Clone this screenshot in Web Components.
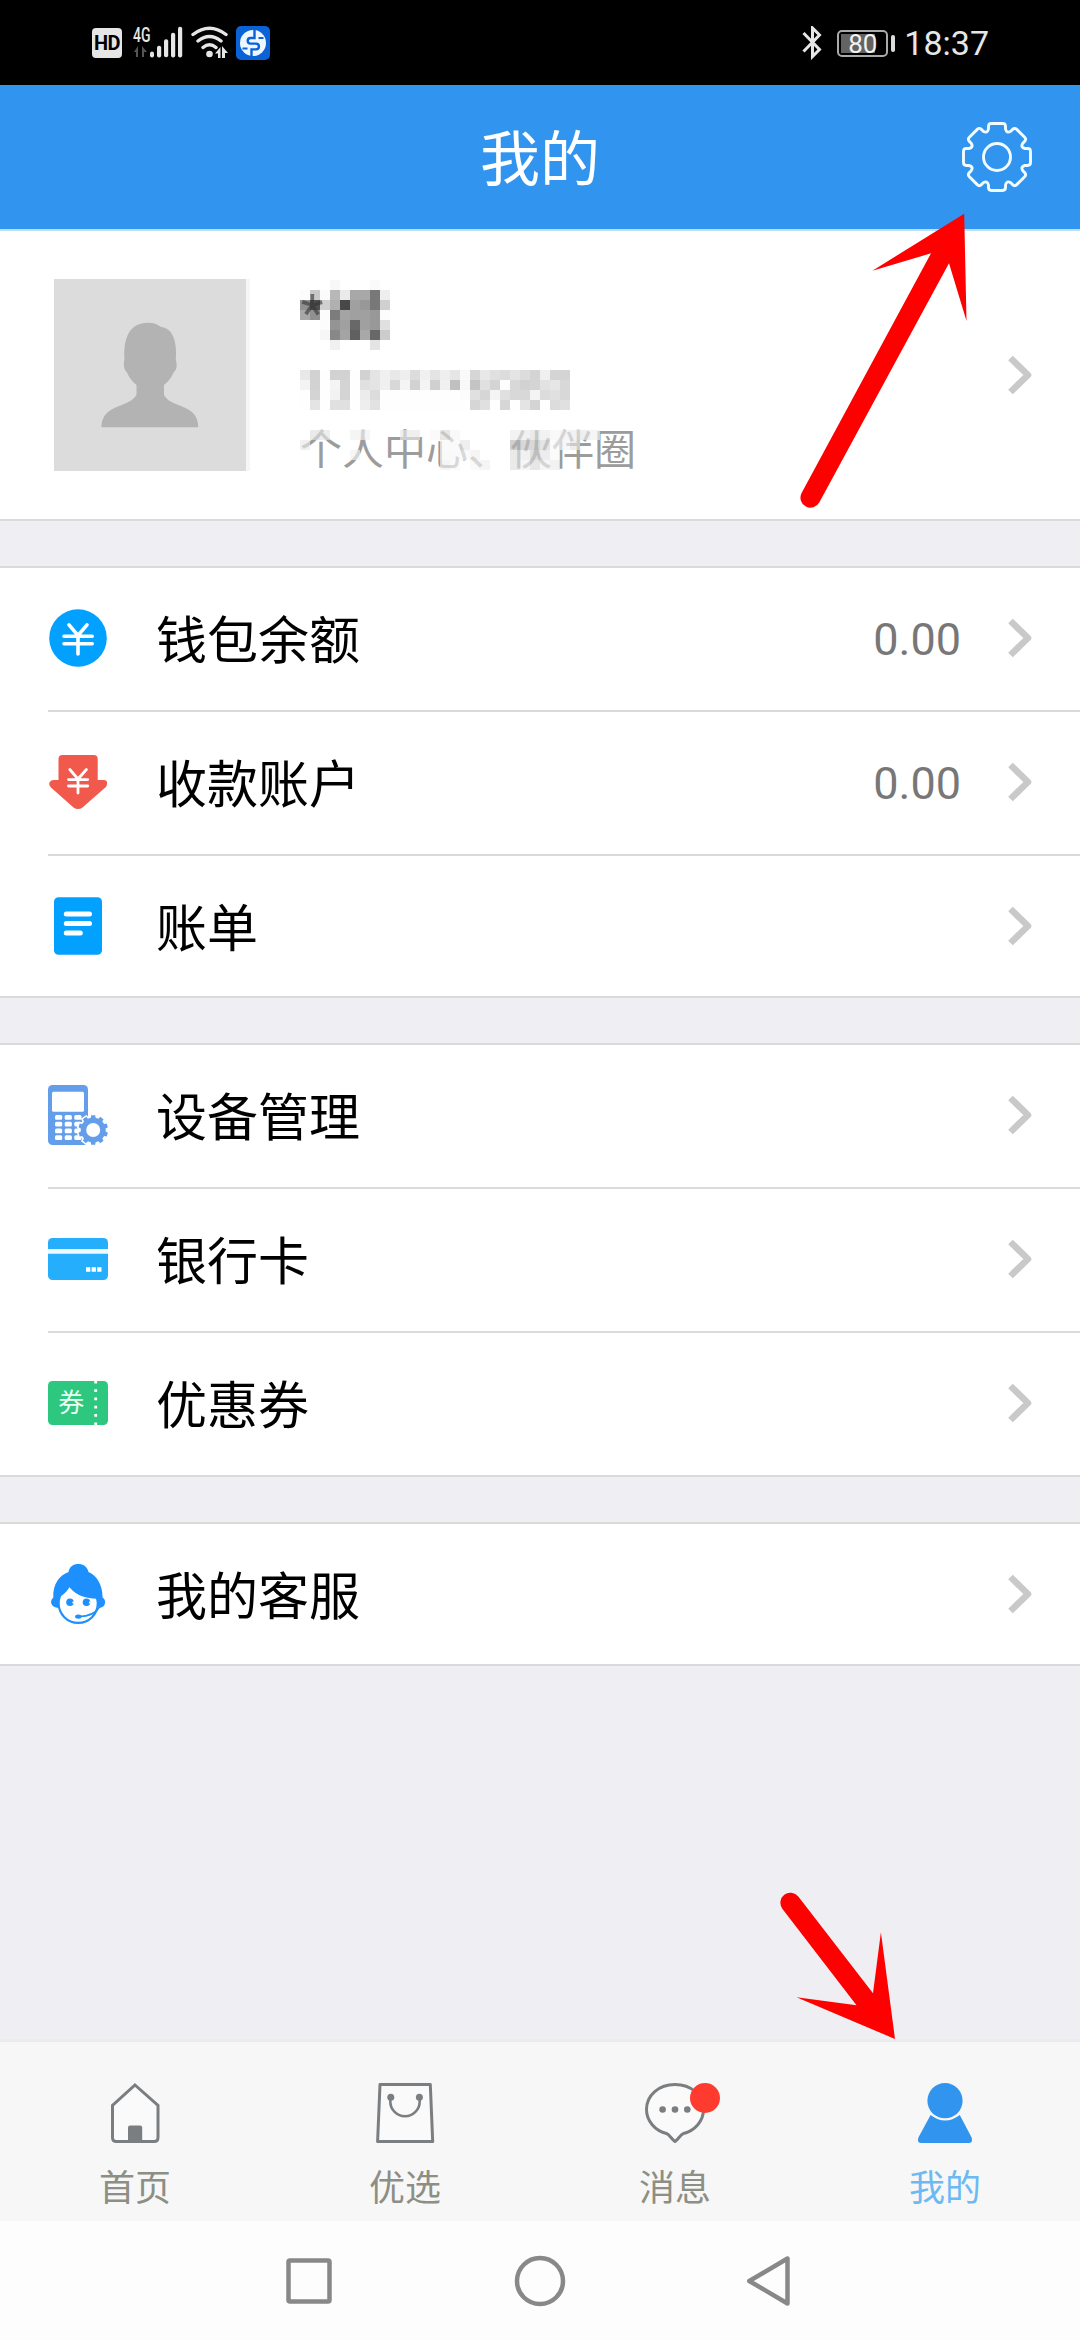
<!DOCTYPE html>
<html lang="zh-CN">
<head>
<meta charset="utf-8">
<title>我的</title>
<style>
  body{margin:0;background:#efeef3;font-family:Roboto,"Noto Sans CJK SC",sans-serif}
</style>
</head>
<body>
<app-screen>
  <status-bar slot="top" time="18:37" battery="80"></status-bar>
  <title-bar slot="top">我的</title-bar>
  <profile-card>个人中心、伙伴圈</profile-card>
  <cell-group>
    <cell-row icon="wallet" value="0.00">钱包余额</cell-row>
    <cell-row icon="account" value="0.00">收款账户</cell-row>
    <cell-row icon="bill" last>账单</cell-row>
  </cell-group>
  <cell-group>
    <cell-row icon="device">设备管理</cell-row>
    <cell-row icon="card">银行卡</cell-row>
    <cell-row icon="coupon" last tall>优惠券</cell-row>
  </cell-group>
  <cell-group>
    <cell-row icon="service" last>我的客服</cell-row>
  </cell-group>
  <tab-bar slot="bottom">
    <tab-item icon="home">首页</tab-item>
    <tab-item icon="bag">优选</tab-item>
    <tab-item icon="chat" badge>消息</tab-item>
    <tab-item icon="me" active>我的</tab-item>
  </tab-bar>
  <nav-keys slot="bottom"></nav-keys>
  <hint-arrows slot="overlay"></hint-arrows>
</app-screen>

<script>
// closed gear outline around 0,0: the same tooth turned n times
function gearPath(n, tooth){
  let d = '';
  for(let i=0;i<n;i++){
    const a = i*2*Math.PI/n, c = Math.cos(a), s = Math.sin(a);
    tooth.forEach(([cmd, ...p], k)=>{
      const out = [];
      for(let j=0;j<p.length;j+=2) out.push((p[j]*c-p[j+1]*s).toFixed(2), (p[j]*s+p[j+1]*c).toFixed(2));
      d += (i===0 && k===0 ? 'M' : cmd) + out.join(' ');
    });
  }
  return d + 'Z';
}

const bigGear = gearPath(8, [
  ['L',-8.5,-28],['L',-8.5,-30.6],['Q',-8.5,-33.5,-5.6,-33.5],['L',5.6,-33.5],
  ['Q',8.5,-33.5,8.5,-30.6],['L',8.5,-28],['Q',9.6,-23.2,13.79,-25.81]
]);
const smallGear = gearPath(10, [['L',-2.4,-12.3],['L',-2,-14.8],['L',2,-14.8],['L',2.4,-12.3]]);

const keys = [7,16.7,26.3].map(x => [30,36.7,43.5,50.2].map(y =>
  `<rect x="${x}" y="${y}" width="7.2" height="4.8" rx="1.5" fill="#fff"/>`).join('')).join('');

// all icons sit in a 60x60 box
const ICONS = {
  wallet: `<circle cx="30" cy="30" r="28.8" fill="#03a1ff"/>
    <path d="M21 16.8 30 27.5 39 16.8M30 27.5V46M16 28.2h28.2M16 35.8h28.2" stroke="#fff" stroke-width="3.6" fill="none" stroke-linecap="round"/>`,
  account: `<path d="M14.5 3h31.2q4 0 4 4v21h6q4.5 0 3 5.5-.5 1.5-2 2.6L34.5 55.5q-4.5 3-9 0L3.5 36q-3-2.5-2-5.5.8-2.5 4-2.5h5V7q0-4 4-4z" fill="#f0594c"/>
    <path d="M21.8 17.5 30 27 38.400 17.5M30 27v14M20.5 27.6h19.2M20.5 34h19.2" stroke="#fff" stroke-width="2.8" fill="none" stroke-linecap="round"/>`,
  bill: `<rect x="6" y="1.3" width="48" height="57.4" rx="4.5" fill="#03a1ff"/>
    <path d="M18.3 18h23.2M18.3 27.6h23.2M18.3 37h14" stroke="#fff" stroke-width="5" stroke-linecap="round"/>`,
  device: `<rect width="40" height="60" rx="4.5" fill="#649eea"/>
    <rect x="4" y="6.8" width="32" height="20" rx="1.5" fill="#fff"/>${keys}
    <g transform="translate(45.2 45)"><path d="${smallGear}" fill="#649eea" stroke="#fff" stroke-width="3" paint-order="stroke"/><circle r="7" fill="#fff"/></g>`,
  card: `<rect y="9" width="60" height="42" rx="4.5" fill="#24aefb"/><path d="M0 20h60v4.700H0z" fill="#fff" opacity=".93"/>
    <path d="M38 38.2h4.3v4.6H38zM43.6 38.2h4.3v4.6h-4.3zM49.2 38.2h4.3v4.6h-4.3z" fill="#fff"/>`,
  coupon: `<rect y="8" width="60" height="44" rx="4.5" fill="#2ec780"/>
    <text x="23.2" y="38.500" text-anchor="middle" font-size="26" fill="#eafff3">券</text>
    <path d="M47.7 8v44" stroke="#fff" stroke-width="2.8" stroke-dasharray="2.6 5.68"/>`,
  service: `<circle cx="30.2" cy="39.3" r="19.6" fill="#fff" stroke="#1e90fe" stroke-width="2.2"/>
    <path d="M20.5 8C21.5 2.5 25.5 0 30.3 0s9 2.5 10.2 8C48.5 11.5 54.5 20 54.6 33.5q2.8 1.5 2.4 5.5-.4 4.2-6.3 5.2l-2.5-9.5C39 34.5 28.5 32 21.5 23.3 19 27.5 15 31.5 11.5 32.7q-2 5-1.3 11.3-7-1-7.2-6 .1-3 2.300-4.500C4.500 20 12 11 20.500 8z" fill="#1e90fe"/>
    <circle cx="22" cy="38.3" r="3.8" fill="#1e90fe"/><circle cx="38.5" cy="38.3" r="3.8" fill="#1e90fe"/>
    <circle cx="25.3" cy="38.6" r="1" fill="#fff"/><circle cx="41.8" cy="38.6" r="1" fill="#fff"/>
    <path d="M51 43.500Q46 52 31 52.600" stroke="#1e90fe" stroke-width="1.8" fill="none"/><ellipse cx="30.3" cy="52.6" rx="3.2" ry="2.2" fill="#1e90fe"/>`,
  home: `<path d="M30 2 53 22.500v32q0 4-4 4H11.500q-4 0-4-4v-32z" fill="#fafafa" stroke="#7b7e80" stroke-width="3"/>
    <path d="M23 60V44.500q0-2 2-2h10.200q2 0 2 2V60z" fill="#7b7e80"/>`,
  bag: `<path d="M5 1.5h50.3l2.400 57H2.600z" fill="#fafafa" stroke="#7b7e80" stroke-width="3" stroke-linejoin="round"/>
    <path d="M15.3 14.5v4a14.700 14.700 0 0 0 29.400 0v-4" fill="none" stroke="#7b7e80" stroke-width="2.6"/>
    <circle cx="15.8" cy="14.3" r="3.500" fill="#7b7e80"/><circle cx="44.4" cy="14.3" r="3.500" fill="#7b7e80"/>`,
  chat: `<path d="M30 1.5C46 1.5 58.5 12 58.5 26.5 58.5 38 50 47.5 38.5 50.5 35.5 51.5 33.5 56 30 58.5 26.500 56 24.500 51.500 21.500 50.500 10 47.500 1.500 38 1.500 26.500 1.500 12 14 1.500 30 1.500z" fill="#fafafa" stroke="#7b7e80" stroke-width="3" stroke-linejoin="round"/>
    <g fill="#7b7e80"><circle cx="17.6" cy="26.5" r="3.3"/><circle cx="30" cy="26.5" r="3.3"/><circle cx="42.3" cy="26.5" r="3.3"/></g>`,
  me: `<circle cx="30" cy="17.7" r="17.6" fill="#3194ef"/>
    <path d="M15.6 32Q30 43 44.8 32L56.6 54.5Q58.3 60 53.5 60h-47Q1.700 60 3.400 54.500z" fill="#3194ef"/>`
};

const svg = (name) => `<svg width="60" height="60" viewBox="0 0 60 60">${ICONS[name]||''}</svg>`;
const chevron = `<svg class="chevron" width="24" height="40" viewBox="0 0 24 40"><path d="M2.5 3 20 20 2.5 37" fill="none" stroke="#c9c9c9" stroke-width="6.6" stroke-linejoin="round"/></svg>`;

class BaseElement extends HTMLElement {
  constructor(){
    super();
    this.attachShadow({mode:'open'});
  }
  connectedCallback(){ this.shadowRoot.innerHTML = this.template(); }
}

class AppScreen extends BaseElement {
  template(){
    return `
      <style>
        :host{display:flex;flex-direction:column;position:relative;width:1080px;height:2340px;overflow:hidden;background:#efeef3}
        main{flex:1;display:flex;flex-direction:column;gap:45px}
      </style>
      <slot name="top"></slot>
      <main><slot></slot></main>
      <slot name="bottom"></slot>
      <slot name="overlay"></slot>`;
  }
}

class StatusBar extends BaseElement {
  template(){
    return `
      <style>
        :host{display:flex;justify-content:space-between;box-sizing:border-box;height:85px;padding:26px 92px 24px;background:#000;color:#e6e6e6}
        .side{display:flex;align-items:center;height:34px}
        .hd{width:30px;height:30px;border-radius:4px;background:#e6e6e6;color:#000;font:700 20px/31px Roboto,sans-serif;text-align:center;letter-spacing:-.5px}
        .cell{margin-left:11px;overflow:visible}
        .wifi{margin-left:8px}
        .pay{margin-left:8px}
        .battery{box-sizing:border-box;width:51px;height:27px;margin-left:15px;border:2px solid #aaa;border-radius:5px;padding:2px;display:flex}
        .battery span{flex:1;background:linear-gradient(90deg,#636363 80%,#000 80%);font-size:26px;line-height:20px;text-align:center;color:#f2f2f2}
        .tip{width:4px;height:17px;border-radius:2px;background:#dcdcdc;margin-left:3px}
        .time{font-size:34px;line-height:34px;margin:0 -1px 0 9px}
      </style>
      <div class="side">
        <span class="hd">HD</span>
        <svg class="cell" width="50" height="34" viewBox="0 0 50 34" fill="#e6e6e6">
          <text x="0" y="16" font-size="21" font-weight="500" textLength="17.5" lengthAdjust="spacingAndGlyphs">4G</text>
          <path d="M1 26l4-6v11H3v-5zM9 20l5 6H11v5H9z" fill="#555"/>
          <rect x="17" y="25.5" width="4" height="6" rx="2"/><rect x="24" y="19.7" width="4.200" height="11.7" rx="2"/>
          <rect x="31" y="13.3" width="4.2" height="18" rx="2"/><rect x="38" y="6.7" width="4.2" height="24.7" rx="2"/>
          <rect x="45" y=".7" width="4.2" height="30.7" rx="2"/>
        </svg>
        <svg class="wifi" width="37" height="34" viewBox="0 0 37 34">
          <g fill="none" stroke="#e6e6e6" stroke-width="3.4" stroke-linecap="round"><path d="M2 8.500Q18.500-4 35 8.500M7 15Q18.500 6 30 15M12 21.500Q18.500 16 25 21.500"/></g>
          <circle cx="18.5" cy="28" r="3.3" fill="#e6e6e6"/>
          <path d="M24 27.500l5.500-6.500v11H27v-4.500zM31 20l6 7h-3v5h-3z" fill="#e6e6e6"/>
        </svg>
        <svg class="pay" width="34" height="34" viewBox="0 0 34 34">
          <rect width="34" height="34" rx="5" fill="#0b61d6"/><circle cx="17" cy="17" r="13" fill="#eef7ff"/>
          <path d="M18.500 3v9h-4a2.800 2.800 0 0 0 0 5.600h5.500a2.900 2.900 0 0 1 0 5.800h-4.500V31" fill="none" stroke="#0b61d6" stroke-width="2.4"/>
          <path d="M22.500 12h5M6.500 22.500h5" stroke="#0b61d6" stroke-width="2"/>
        </svg>
      </div>
      <div class="side">
        <svg width="20" height="34" viewBox="0 0 20 34"><path d="M1.500 7 17.500 23.500 10.500 30.500V2L17.500 9 1.500 25.500" fill="none" stroke="#e6e6e6" stroke-width="3"/></svg>
        <div class="battery"><span>${this.getAttribute('battery')}</span></div>
        <div class="tip"></div>
        <span class="time">${this.getAttribute('time')}</span>
      </div>`;
  }
}

class TitleBar extends BaseElement {
  template(){
    return `
      <style>
        :host{display:grid;grid-template-columns:1fr auto 1fr;align-items:center;box-sizing:border-box;height:146px;padding:0 46px;background:#3194ef;border-bottom:2px solid #bfdff5}
        h1{grid-column:2;margin:0;padding-top:8px;font-size:60px;font-weight:400;line-height:80px;color:#fff}
        svg{justify-self:end;display:block}
      </style>
      <h1><slot></slot></h1>
      <svg width="74" height="74" viewBox="-37 -37 74 74" fill="none" stroke="#f2fcff" stroke-width="2.9" stroke-linejoin="round">
        <path d="${bigGear}"/><circle r="13.5"/>
      </svg>`;
  }
}

// block-pixel censor: each row is a list of grey levels in hex, -- leaves a hole
class PixelMask extends BaseElement {
  template(){
    const rows = this.getAttribute('rows').split('|').map(r => r.trim().split(/\s+/));
    let rects = '';
    rows.forEach((r,y)=> r.forEach((v,x)=>{
      if(v !== '--') rects += `<rect x="${x*10}" y="${y*10}" width="10" height="10" fill="#${v+v+v}"/>`;
    }));
    const w = Math.max(...rows.map(r => r.length))*10;
    return `<style>:host{display:block}svg{display:block}</style>
      <svg width="${w}" height="${rows.length*10}" shape-rendering="crispEdges">${rects}</svg>`;
  }
}

const NAME_ROWS = `-- -- -- f7 -- -- -- fa --|fc c8 fb b8 ea a8 a8 78 ee|90 50 d0 b0 48 a0 98 78 d0|a8 90 fc 7c a4 a0 a0 98 fc|
  -- -- fc 94 a0 68 a0 98 e0|-- -- f6 88 a4 60 a8 68 cc|-- -- -- f0 -- -- -- e4 --`;
const PHONE_ROWS = `e8 d2 fe d2 d2 fe d2 e4 f0 e8 ee dc f0 e4 ee e6 fa d6 e8 e0 dc e4 dc d4 f0 d4 d4|
  f4 d2 fe f4 d4 fe e0 e4 f0 d8 f4 d2 f4 d0 f0 c0 f8 c4 e0 d4 fd d8 d2 d4 e2 e6 d8|
  fe d4 fe f2 d4 fe ec dc fe fe fe fe fe fe fe fe fc e0 d6 f4 e0 d8 d8 f4 dc e0 d8|
  fe e4 fe e0 e0 fe ee e2 fe fe fe fe fe fe fe fe fe d6 e0 fe d6 fe e4 d4 fe dc e0`;
const LINK_ROWS = `-- e0 e6 -- -- f0 f0 -- -- -- e8 e8 -- f8 dc f6 -- -- -- -- -- ec ea e0 ec f6 f0 ec e8 f0|
  ea -- -- -- -- -- -- -- -- -- -- -- -- -- f8 f8 e8 -- -- -- -- b8 c4 c4 d8 fa f4 e4 -- --|
  -- -- -- -- -- f2 -- -- -- -- -- -- -- -- f6 f6 f8 f0 -- -- -- e0 ea d0 e4 fa -- -- -- --|
  -- -- -- -- -- -- -- -- -- -- -- -- -- -- f0 f8 -- f8 f0 -- -- e0 f2 dc f2 ec -- -- -- --`;

class ProfileCard extends BaseElement {
  template(){
    return `
      <style>
        :host{display:flex;align-items:center;box-sizing:border-box;height:290px;padding:0 48px 2px 54px;background:linear-gradient(#dadada,#dadada) bottom/100% 2px no-repeat #fff}
        .avatar{display:block;background:#dcdcdc;box-shadow:4px 0 0 #f6f6f6}
        .info{flex:1;height:192px;margin-left:54px;padding-top:1px;box-sizing:border-box}
        .name,.link{position:relative}
        .name{height:70px;margin-bottom:20px}
        .name b{position:absolute;left:1px;top:4px;font-size:52px;line-height:60px;font-weight:400;color:#333;opacity:.6}
        .link{height:40px;margin-top:20px;line-height:42px;font-size:42px;color:#9c9c9c;white-space:nowrap}
        .link pixel-mask{position:absolute;left:0;top:0;opacity:.66}
      </style>
      <svg class="avatar" width="192" height="192" viewBox="0 0 192 192">
        <path d="M70.5 81C69 58 76 43.7 94 43.7q8 0 13 4.3c11 1 16.5 13 14.8 33q1.2 2.5.8 7-.6 4-3 5.5Q116.5 101 110 106v10c3 5 7 7 12 9 12 5 22 8 22.3 23.3H47.4C48 133 58 130 70 125c5-2 9-4 12.5-9v-10Q76 101 73 93.5c-3-2-4-9-2.500-12.500z" fill="#b3b3b3"/>
      </svg>
      <div class="info">
        <div class="name"><pixel-mask rows="${NAME_ROWS}"></pixel-mask><b>*</b></div>
        <pixel-mask rows="${PHONE_ROWS}"></pixel-mask>
        <div class="link"><slot></slot><pixel-mask rows="${LINK_ROWS}"></pixel-mask></div>
      </div>
      ${chevron}`;
  }
}

class CellGroup extends BaseElement {
  template(){
    return `
      <style>
        :host{display:block;background:#fff;border-top:2px solid #dadada;border-bottom:2px solid #dadada}
      </style>
      <slot></slot>`;
  }
}

class CellRow extends BaseElement {
  template(){
    const value = this.getAttribute('value');
    return `
      <style>
        :host{display:flex;align-items:center;height:140px;margin-left:48px;padding:0 48px 2px 0;border-bottom:2px solid #dadada}
        :host([last]){border-bottom:0;padding-bottom:0}
        :host([tall]){padding-bottom:2px}
        .icon{display:flex;width:60px}
        .label{flex:1;margin-left:48px;padding-top:8px;font-size:51px;line-height:60px;color:#000}
        .value{font-size:45px;line-height:60px;color:#777;margin-right:47px;padding-top:3px}
      </style>
      <span class="icon">${svg(this.getAttribute('icon'))}</span>
      <span class="label"><slot></slot></span>
      ${value ? `<span class="value">${value}</span>` : ''}
      ${chevron}`;
  }
}

class TabBar extends BaseElement {
  template(){
    return `
      <style>
        :host{display:grid;grid-template-columns:repeat(4,1fr);box-sizing:border-box;height:182px;background:#f7f7f7;border-top:3px solid #ebebeb}
      </style>
      <slot></slot>`;
  }
}

class TabItem extends BaseElement {
  template(){
    return `
      <style>
        :host{display:flex;flex-direction:column;align-items:center;padding-top:41px;color:#8d8e84}
        :host([active]){color:#6db9f2}
        .icon{position:relative;display:flex}
        .badge{position:absolute;left:45px;top:0;width:30px;height:30px;border-radius:50%;background:#ff3b30}
        .label{margin-top:26px;font-size:36px;line-height:40px}
      </style>
      <span class="icon">${svg(this.getAttribute('icon'))}${this.hasAttribute('badge') ? '<i class="badge"></i>' : ''}</span>
      <span class="label"><slot></slot></span>`;
  }
}

class NavKeys extends BaseElement {
  template(){
    return `
      <style>
        :host{display:flex;justify-content:center;gap:171px;box-sizing:border-box;height:119px;padding-top:30px;background:#fdfdfd}
        svg{fill:none;stroke:#888;stroke-width:4.5;stroke-linejoin:round}
      </style>
      <svg width="60" height="60"><rect x="9.5" y="9.5" width="41" height="41" rx="1.5"/></svg>
      <svg width="60" height="60"><circle cx="30" cy="30" r="23"/></svg>
      <svg width="60" height="60"><path d="M46.500 7.500v45L8.300 30z"/></svg>`;
  }
}

// red pointers laid over the page
class HintArrows extends BaseElement {
  template(){
    return `
      <style>
        :host{display:block;position:absolute;inset:0;pointer-events:none}
        svg{display:block}
      </style>
      <svg width="1080" height="2340" fill="#f00">
        <path d="M964.2 213.7 872.4 270.7 931 253.3 801.6 493A10 10 0 0 0 819.4 502.3L949 263.3 966.5 321z"/>
        <path d="M895 2039 880.9 1932.3 873 1993.3 798.3 1896.5A10 10 0 0 0 782.5 1908.9L856.5 2005.3 796.5 1997.3z"/>
      </svg>`;
  }
}

customElements.define('app-screen', AppScreen);
customElements.define('status-bar', StatusBar);
customElements.define('title-bar', TitleBar);
customElements.define('pixel-mask', PixelMask);
customElements.define('profile-card', ProfileCard);
customElements.define('cell-group', CellGroup);
customElements.define('cell-row', CellRow);
customElements.define('tab-bar', TabBar);
customElements.define('tab-item', TabItem);
customElements.define('nav-keys', NavKeys);
customElements.define('hint-arrows', HintArrows);
</script>
</body>
</html>
